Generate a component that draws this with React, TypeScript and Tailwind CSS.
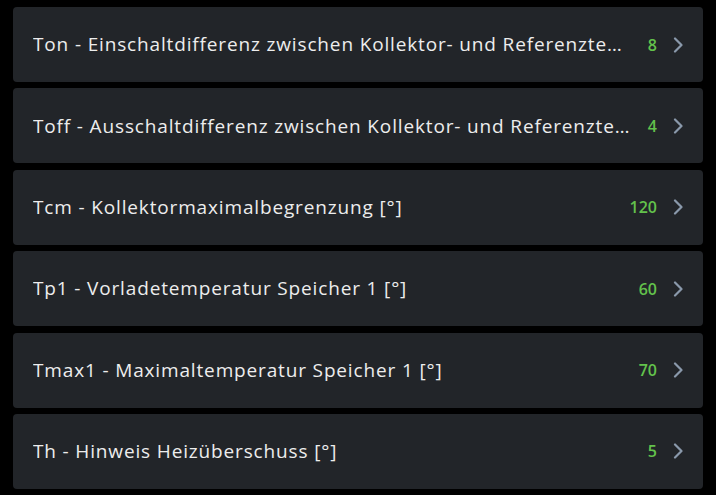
import React from 'react';

const params = [
  { label: 'Ton - Einschaltdifferenz zwischen Kollektor- und Referenztemperatur [°]', value: '8' },
  { label: 'Toff - Ausschaltdifferenz zwischen Kollektor- und Referenztemperatur [°]', value: '4' },
  { label: 'Tcm - Kollektormaximalbegrenzung [°]', value: '120' },
  { label: 'Tp1 - Vorladetemperatur Speicher 1 [°]', value: '60' },
  { label: 'Tmax1 - Maximaltemperatur Speicher 1 [°]', value: '70' },
  { label: 'Th - Hinweis Heizüberschuss [°]', value: '5' },
];

const Chevron = () => (
  <svg width="11" height="16" viewBox="0 0 11 16" fill="none" className="shrink-0">
    <polyline points="2,1.5 8.5,8 2,14.5" stroke="#8a99ab" strokeWidth="2.2" strokeLinecap="round" strokeLinejoin="round" />
  </svg>
);

export default function App() {
  return (
    <div className="w-[716px] h-[495px] bg-black pt-[7px] px-[13px] flex flex-col gap-[6.4px] overflow-hidden">
      {params.map((p) => (
        <div
          key={p.label}
          className="h-[75px] shrink-0 rounded-[4px] bg-[#222529] flex items-center pl-[20px] pr-[19px]"
        >
          <span className="flex-1 min-w-0 truncate text-[19px] font-medium text-[#ededed] font-['Open_Sans',sans-serif] tracking-[0.85px]">
            {p.label}
          </span>
          <span className="ml-[18px] text-[16px] font-semibold text-[#63c24c] font-['Open_Sans',sans-serif]">
            {p.value}
          </span>
          <span className="ml-[16px]">
            <Chevron />
          </span>
        </div>
      ))}
    </div>
  );
}
